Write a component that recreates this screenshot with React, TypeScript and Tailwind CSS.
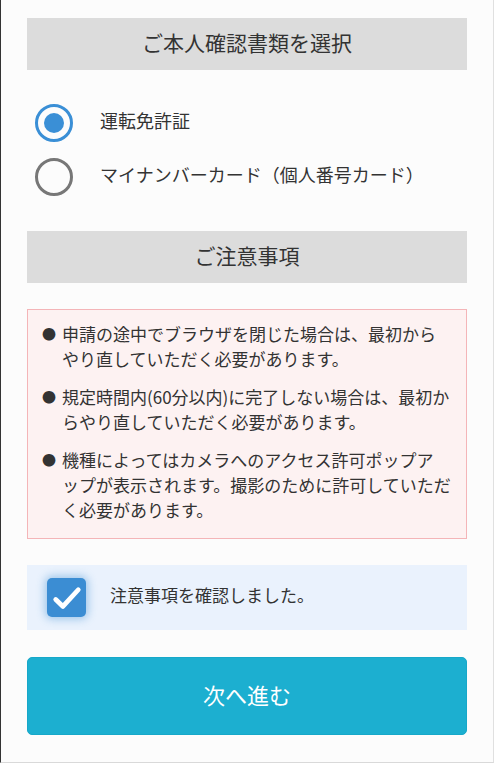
import { useState } from "react";

const font = { fontFamily: '"Noto Sans CJK JP", "Noto Sans", sans-serif' };

// lines broken the same way as the design
const notes = [
  ["申請の途中でブラウザを閉じた場合は、最初から", "やり直していただく必要があります。"],
  ["規定時間内(60分以内)に完了しない場合は、最初か", "らやり直していただく必要があります。"],
  [
    "機種によってはカメラへのアクセス許可ポップア",
    "ップが表示されます。撮影のために許可していただ",
    "く必要があります。",
  ],
];

const docs = ["運転免許証", "マイナンバーカード（個人番号カード）"];

function SectionTitle({ children }: { children: React.ReactNode }) {
  return (
    <div className="flex h-[52px] items-center justify-center bg-[#dcdcdc] text-[21px] text-[#333]">
      <span className="pb-[3px]">{children}</span>
    </div>
  );
}

export default function App() {
  const [doc, setDoc] = useState(0);
  const [agreed, setAgreed] = useState(true);

  return (
    <div
      style={font}
      className="h-[763px] w-[494px] border-b border-l border-r border-b-[#d9d9d9] border-l-[#333] border-r-[#e0e0e0] bg-[#fcfcfc] px-[26px] pt-[18px] text-[#333]"
    >
      <SectionTitle>ご本人確認書類を選択</SectionTitle>

      <div className="mt-[34px] flex flex-col gap-4 pl-2">
        {docs.map((label, i) => (
          <button
            key={label}
            type="button"
            onClick={() => setDoc(i)}
            className="flex items-center gap-[27px] text-left text-[18px]"
          >
            <span
              className={
                "flex h-[38px] w-[38px] shrink-0 items-center justify-center rounded-full border-[3px] " +
                (doc === i ? "border-[#3a8fd6]" : "border-[#777]")
              }
            >
              {doc === i && <span className="h-[20px] w-[20px] rounded-full bg-[#3a8fd6]" />}
            </span>
            <span className="pb-[5px]">{label}</span>
          </button>
        ))}
      </div>

      <div className="mt-[35px]">
        <SectionTitle>ご注意事項</SectionTitle>
      </div>

      <div className="mt-[26px] flex h-[230px] flex-col gap-[13px] border border-[#f4b5b8] bg-[#fdf2f2] pl-[14px] pt-[11px] text-[17px] leading-[25px]">
        {notes.map((lines) => (
          <div key={lines[0]} className="flex">
            <span className="w-[20px] shrink-0 text-[14px]">●</span>
            <p className="whitespace-nowrap">
              {lines.map((l, j) => (
                <span key={j}>
                  {j > 0 && <br />}
                  {l}
                </span>
              ))}
            </p>
          </div>
        ))}
      </div>

      <label className="mt-[26px] flex h-[65px] cursor-pointer items-center gap-6 bg-[#eaf2fd] pl-5 text-[17px]">
        <input
          type="checkbox"
          className="sr-only"
          checked={agreed}
          onChange={(e) => setAgreed(e.target.checked)}
        />
        <span
          className={
            "flex h-[39px] w-[39px] shrink-0 items-center justify-center rounded-[5px] " +
            (agreed
              ? "bg-[#3b8dd3] shadow-[0_0_8px_2px_rgba(59,141,211,0.45)]"
              : "border-2 border-[#999] bg-white")
          }
        >
          {agreed && (
            <svg viewBox="0 0 24 24" className="h-[36px] w-[36px]" fill="none">
              <path
                d="M4.5 13l4.8 4.6L19.5 6.5"
                stroke="#fff"
                strokeWidth="3.2"
                strokeLinecap="round"
                strokeLinejoin="round"
              />
            </svg>
          )}
        </span>
        <span className="pb-[5px]">注意事項を確認しました。</span>
      </label>

      <button
        type="button"
        className="mt-[27px] flex h-[78px] w-full items-center justify-center rounded-[5px] border border-[#17a8c9] bg-[#1cafd0] text-[22px] text-white"
      >
        <span className="pb-[3px]">次へ進む</span>
      </button>
    </div>
  );
}
